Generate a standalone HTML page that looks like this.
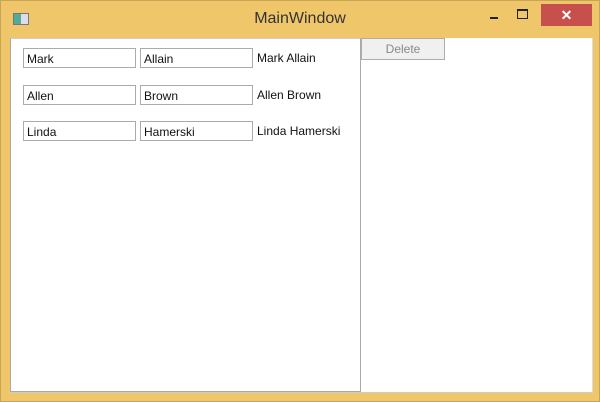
<!DOCTYPE html>
<html><head><style>
body{margin:0;width:600px;height:402px;background:#f0c66b;position:relative;overflow:hidden;font-family:"Segoe UI","Liberation Sans",sans-serif;}
.frame{position:absolute;left:0;top:0;width:598px;height:400px;border:1px solid #c9a456;}
.title{position:absolute;left:0;width:600px;top:10px;text-align:center;font-size:16px;color:#333;}
.client{position:absolute;left:10px;top:38px;width:582px;height:354px;background:#fff;border-right:1px solid #ddd;border-bottom:1px solid #ccc;}
.left{position:absolute;left:10px;top:38px;width:349px;height:352px;border:1px solid #aaa;border-top:1px solid #ccc;}
.tb{position:absolute;border:1px solid #ababab;font-size:12px;line-height:20px;padding-left:3px;box-sizing:border-box;height:20px;color:#111;}
.lb{position:absolute;font-size:12px;color:#111;}
.btn{position:absolute;left:361px;top:38px;width:84px;height:22px;box-sizing:border-box;border:1px solid #adadad;background:#f0f0f0;color:#888;font-size:12px;text-align:center;line-height:20px;}
.close{position:absolute;left:541px;top:4px;width:51px;height:22px;background:#c7504c;color:#fff;text-align:center;font-size:14px;line-height:22px;font-weight:bold;}
</style></head><body>
<div class="frame"></div>
<div style="position:absolute;left:13px;top:13px;width:14px;height:10px;border:1px solid #777;background:linear-gradient(90deg,#5a9 0 50%,#dde 50%);"></div>
<div class="title">MainWindow</div>
<div style="position:absolute;left:490px;top:17px;width:8px;height:2px;background:#222"></div>
<div style="position:absolute;left:517px;top:9px;width:9px;height:7px;border:1px solid #222;border-top-width:2px"></div>
<div class="close">✕</div>
<div class="client"></div>
<div class="left"></div>
<div class="tb" style="left:23px;top:48px;width:113px">Mark</div>
<div class="tb" style="left:140px;top:48px;width:113px">Allain</div>
<div class="lb" style="left:257px;top:51px">Mark Allain</div>
<div class="tb" style="left:23px;top:85px;width:113px">Allen</div>
<div class="tb" style="left:140px;top:85px;width:113px">Brown</div>
<div class="lb" style="left:257px;top:88px">Allen Brown</div>
<div class="tb" style="left:23px;top:121px;width:113px">Linda</div>
<div class="tb" style="left:140px;top:121px;width:113px">Hamerski</div>
<div class="lb" style="left:257px;top:124px">Linda Hamerski</div>
<div class="btn">Delete</div>
</body></html>
